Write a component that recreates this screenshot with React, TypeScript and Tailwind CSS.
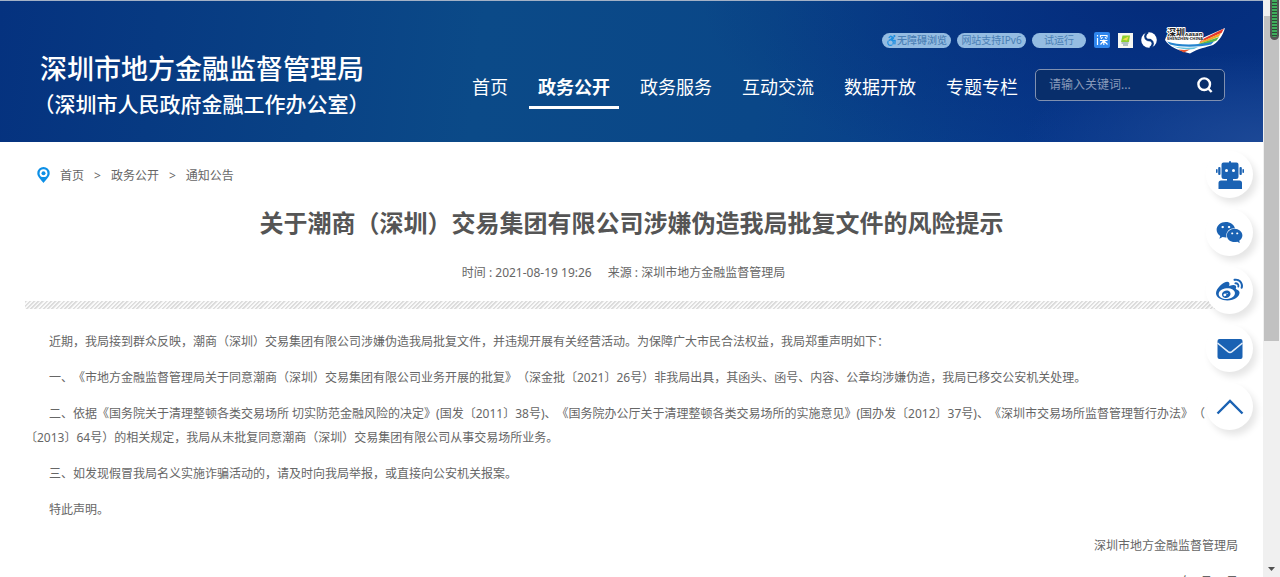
import type { ReactNode } from 'react';
import { FaAccessibleIcon, FaWeibo, FaWeixin } from 'react-icons/fa';

const NAV_ITEMS = ['首页', '政务公开', '政务服务', '互动交流', '数据开放', '专题专栏'];
const ACTIVE_NAV = '政务公开';

const CRUMBS = ['首页', '政务公开', '通知公告'];

function SearchIcon() {
  return (
    <svg width="16" height="16" viewBox="0 0 16 16" fill="none" stroke="currentColor" strokeWidth="2.4">
      <circle cx="7.2" cy="7.2" r="5.8" />
      <path d="M10.8 11 14.6 15" />
    </svg>
  );
}

function PinIcon() {
  return (
    <svg width="13" height="16" viewBox="0 0 13 16">
      <path d="M6.5 0A6.2 6.2 0 0 0 .3 6.2C.3 10 4.8 13.4 6.5 16 8.2 13.4 12.7 10 12.7 6.2A6.2 6.2 0 0 0 6.5 0Z" fill="#0d8fe6" />
      <circle cx="6.5" cy="6.2" r="3.9" fill="#fff" />
      <circle cx="6.5" cy="6.2" r="2" fill="#0d8fe6" />
    </svg>
  );
}

function RobotIcon() {
  return (
    <svg width="28" height="28" viewBox="0 0 28 28" fill="currentColor">
      <rect x="13" y="0" width="2" height="3" rx="1" />
      <path d="M7.5 1.5h13a2 2 0 0 1 2 2v12a2.5 2.5 0 0 1-2.5 2.5h-3v1.5h6.5a2.500 2.500 0 0 1 2.500 2.500V28H2.500v-6a2.500 2.500 0 0 1 2.500-2.500H11V18H8a2.500 2.500 0 0 1-2.500-2.500v-12a2 2 0 0 1 2-2Z" />
      <rect x="2.2" y="6" width="2.3" height="8" rx="1" />
      <rect x="0" y="8" width="1.6" height="4" rx=".8" />
      <rect x="23.5" y="6" width="2.3" height="8" rx="1" />
      <rect x="26.4" y="8" width="1.6" height="4" rx=".8" />
      <circle cx="10.5" cy="9.5" r="1.5" fill="#fff" />
      <circle cx="17.5" cy="9.5" r="1.5" fill="#fff" />
    </svg>
  );
}

function MailIcon() {
  return (
    <svg width="26" height="20" viewBox="0 0 26 20">
      <rect x=".5" y="0" width="25" height="20" rx="2" fill="currentColor" />
      <path d="M.5 4 11 12.6a3.4 3.4 0 0 0 4 0L25.5 4" fill="none" stroke="#e3eefa" strokeWidth="1.6" />
    </svg>
  );
}

function UpIcon() {
  return (
    <svg width="28" height="16" viewBox="0 0 28 16" fill="none" stroke="currentColor" strokeWidth="2.4">
      <path d="M1.5 14.5 14 2l12.500 12.500" />
    </svg>
  );
}

function BudgetIcon() {
  return (
    <svg width="16" height="16" viewBox="0 0 16 16">
      <rect width="16" height="16" rx="2" fill="#2f86ee" />
      <g fill="none" stroke="#fff" strokeWidth="1.2">
        <path d="M3.500 3v1.500M3.500 6v7M6.500 5.500V3.500h6.500v2M8.500 5 7 7M11 5l1.500 2M6 8.500h7.500M9.800 7.500V13M9.500 9 6.500 12.500M10 9l3.500 3.500" />
      </g>
    </svg>
  );
}

function ReportIcon() {
  return (
    <svg width="15" height="15" viewBox="0 0 15 15">
      <rect width="15" height="15" fill="#f6f7f2" />
      <path d="M4.500 2.500H12l-1 6.500H3Z" fill="#8ed02f" />
      <path d="M4.500 6.500 10.500 3.500 9 7.500Z" fill="#f3e04a" />
      <path d="M3.500 10h7M5 12h5" stroke="#6b8a90" strokeWidth="1" />
    </svg>
  );
}

function LinkBallIcon() {
  return (
    <svg width="16" height="16" viewBox="0 0 16 16">
      <circle cx="8" cy="8" r="7.8" fill="#fff" />
      <path d="M7 0C3.500 2.500 3.500 6 6 7.500l4 .5M9 16c3.500-2.500 3.500-6 1-7.500L6 8" fill="none" stroke="#08357f" strokeWidth="2.2" />
    </svg>
  );
}

function CityLogo() {
  return (
    <svg width="60" height="27" viewBox="0 0 60 27">
      <path d="M1 10h34v2L60 1c-2 7-6 13-12 17-6 2-16 4-23 8.500C15 24 4 20 0 13Z" fill="#fff" />
      <path d="M36 13 59 1.500 56.500 6C48 9 42 13 35 15Z" fill="#e5382c" />
      <path d="M35 15c8-3 14-6 21-9l-2 3.500c-7 3-12 5-20 7Z" fill="#f7a823" />
      <path d="M33 17c8-2 14-5 21-7l-2.500 3.500C45 16 40 18 32 19Z" fill="#5bb947" />
      <path d="M2 14.500c11 4 31 4 47 0l-3 3c-13 3-30 3-41 0Z" fill="#2484cf" />
      <path d="M7 19c8 2 17 2 26 1l-4 2c-6 1-11 0-16-1Z" fill="#63c2dd" />
      <path d="M13 22.500c5 .5 8 .5 12 0L19 25.500Z" fill="#e8552f" />
      <g fill="#222" stroke="#fff" paintOrder="stroke" strokeLinejoin="round">
        <text x="2" y="9" fontSize="9" fontWeight="700" strokeWidth="2">深圳</text>
        <text x="20" y="9" fontSize="6" fontWeight="700" strokeWidth="2">ʌasan</text>
        <text x="2" y="13" fontSize="4" fontWeight="700" strokeWidth="1">SHENZHEN·CHINA</text>
      </g>
    </svg>
  );
}

function Pill({ wide, children }: { wide?: boolean; children: ReactNode }) {
  return (
    <a
      href="#"
      className={`flex h-[15px] items-center justify-center rounded-full bg-[#94bce2] text-[10px] leading-none whitespace-nowrap text-[#4a7fb5] ${wide ? 'w-[69px]' : 'w-[54px]'}`}
    >
      {children}
    </a>
  );
}

function SideButton({ label, children }: { label: string; children: ReactNode }) {
  return (
    <button
      type="button"
      aria-label={label}
      className="flex size-[47px] items-center justify-center rounded-full bg-white text-[#1a62b3] shadow-[4px_5px_7px_rgba(0,0,0,0.1)]"
    >
      {children}
    </button>
  );
}

function Header() {
  return (
    <header className="flex h-[142px] justify-between border-t border-[#a3b1c6] bg-[radial-gradient(ellipse_240px_90px_at_100%_100%,#1c4896_0%,transparent_100%),radial-gradient(ellipse_460px_190px_at_92%_0%,#042c7b_0%,transparent_100%),linear-gradient(97deg,#05327f_0%,#0b4a88_38%,#0a4788_60%,#083a8e_84%)] pr-[38px] pl-10 text-white">
      <div className="pt-[50px] font-medium whitespace-nowrap">
        <div className="text-[27px] leading-9">深圳市地方金融监督管理局</div>
        <div className="pl-1 text-[21px] leading-[34px] [text-spacing-trim:trim-start]">（深圳市人民政府金融工作办公室）</div>
      </div>
      <div className="flex flex-col items-end pt-6">
        <div className="flex h-[30px] items-center gap-1.5">
          <Pill wide>
            <FaAccessibleIcon size={11} className="text-[#1f8fe0]" />
            <span className="font-medium">无障碍浏览</span>
          </Pill>
          <Pill wide>网站支持IPv6</Pill>
          <Pill>试运行</Pill>
          <div className="flex items-center gap-2 pl-0.5">
            <a href="#" aria-label="预算"><BudgetIcon /></a>
            <a href="#" aria-label="报告"><ReportIcon /></a>
            <a href="#" aria-label="链接"><LinkBallIcon /></a>
            <a href="#" aria-label="深圳"><CityLogo /></a>
          </div>
        </div>
        <div className="flex gap-2 pt-3.5">
          <nav className="flex gap-3 text-lg leading-9">
            {NAV_ITEMS.map(item => (
              <a
                key={item}
                href="#"
                className={`h-10 border-b-3 px-[9px] whitespace-nowrap ${item === ACTIVE_NAV ? 'border-white font-bold' : 'border-transparent'}`}
              >
                {item}
              </a>
            ))}
          </nav>
          <form className="flex h-8 w-[190px] items-center rounded-[5px] border border-[#8090b0] bg-[#082e6b] pr-[11px] pl-[13px]">
            <input
              type="text"
              aria-label="搜索"
              placeholder="请输入关键词..."
              className="min-w-0 flex-1 bg-transparent text-xs outline-none placeholder:text-[#8a9bbb]"
            />
            <button type="button" aria-label="搜索按钮"><SearchIcon /></button>
          </form>
        </div>
      </div>
    </header>
  );
}

function Article() {
  return (
    <main className="px-[25px] text-[#666] [text-spacing-trim:space-all]">
      <nav className="flex h-[66px] items-center gap-2.5 pl-3 text-xs">
        <PinIcon />
        <ol className="flex pt-0.5">
          {CRUMBS.map((crumb, i) => (
            <li key={crumb}>
              {i > 0 && <span className="px-2.5">&gt;</span>}
              <a href="#">{crumb}</a>
            </li>
          ))}
        </ol>
      </nav>
      <h1 className="text-center text-2xl leading-[30px] font-bold text-[#555]">
        关于潮商（深圳）交易集团有限公司涉嫌伪造我局批复文件的风险提示
      </h1>
      <div className="flex justify-center pt-[23px] text-xs leading-6">
        <span className="pr-4">时间 : 2021-08-19 19:26</span>
        <span className="pr-4">来源 : 深圳市地方金融监督管理局</span>
      </div>
      <div className="mt-4 h-2 bg-[repeating-linear-gradient(135deg,#dcdcdc_0px,#dcdcdc_1px,#fafafa_2px,#fafafa_3px)]" />
      <div className="flex flex-col gap-3 pt-[21px] indent-6 text-xs leading-6">
        <p>近期，我局接到群众反映，潮商（深圳）交易集团有限公司涉嫌伪造我局批复文件，并违规开展有关经营活动。为保障广大市民合法权益，我局郑重声明如下：</p>
        <p>一、《市地方金融监督管理局关于同意潮商（深圳）交易集团有限公司业务开展的批复》（深金批〔2021〕26号）非我局出具，其函头、函号、内容、公章均涉嫌伪造，我局已移交公安机关处理。</p>
        <p>
          二、依据《国务院关于清理整顿各类交易场所 切实防范金融风险的决定》(国发〔2011〕38号)、《国务院办公厅关于清理整顿各类交易场所的实施意见》(国办发〔2012〕37号)、《深圳市交易场所监督管理暂行办法》（
          <br />
          〔2013〕64号）的相关规定，我局从未批复同意潮商（深圳）交易集团有限公司从事交易场所业务。
        </p>
        <p>三、如发现假冒我局名义实施诈骗活动的，请及时向我局举报，或直接向公安机关报案。</p>
        <p>特此声明。</p>
        <p className="text-right">深圳市地方金融监督管理局</p>
        <p className="text-right">2021年8月19日</p>
      </div>
    </main>
  );
}

export default function App() {
  return (
    <div className="flex h-screen overflow-hidden bg-white font-['Noto_Sans','Noto_Sans_CJK_SC',sans-serif]">
      <div className="min-w-0 flex-1">
        <Header />
        <Article />
      </div>

      {/* scrollbar */}
      <div className="relative flex w-[17px] flex-col items-center bg-[#f0f0f0]">
        <div className="h-4" />
        <div className="h-[325px] w-[15px] bg-[#c1c1c1]" />
        <div className="flex-1" />
        <svg width="9" height="17" viewBox="0 0 9 17"><path d="M1 7h7l-3.500 4Z" fill="#505050" /></svg>
        {/* meter sitting on top of the bar */}
        <div className="absolute top-0 right-px h-10 w-[9px] rounded-b-full border-x-2 border-b-3 border-[#555] bg-[repeating-linear-gradient(180deg,#3fae5c_0px,#3fae5c_2px,#2c4a36_2px,#2c4a36_3px)]" />
      </div>

      <aside className="fixed top-[151px] right-[27px] flex flex-col gap-[11px]">
        <SideButton label="智能机器人"><RobotIcon /></SideButton>
        <SideButton label="微信"><FaWeixin size={27} /></SideButton>
        <SideButton label="微博"><FaWeibo size={27} /></SideButton>
        <SideButton label="邮箱"><MailIcon /></SideButton>
        <SideButton label="返回顶部"><UpIcon /></SideButton>
      </aside>
    </div>
  );
}
